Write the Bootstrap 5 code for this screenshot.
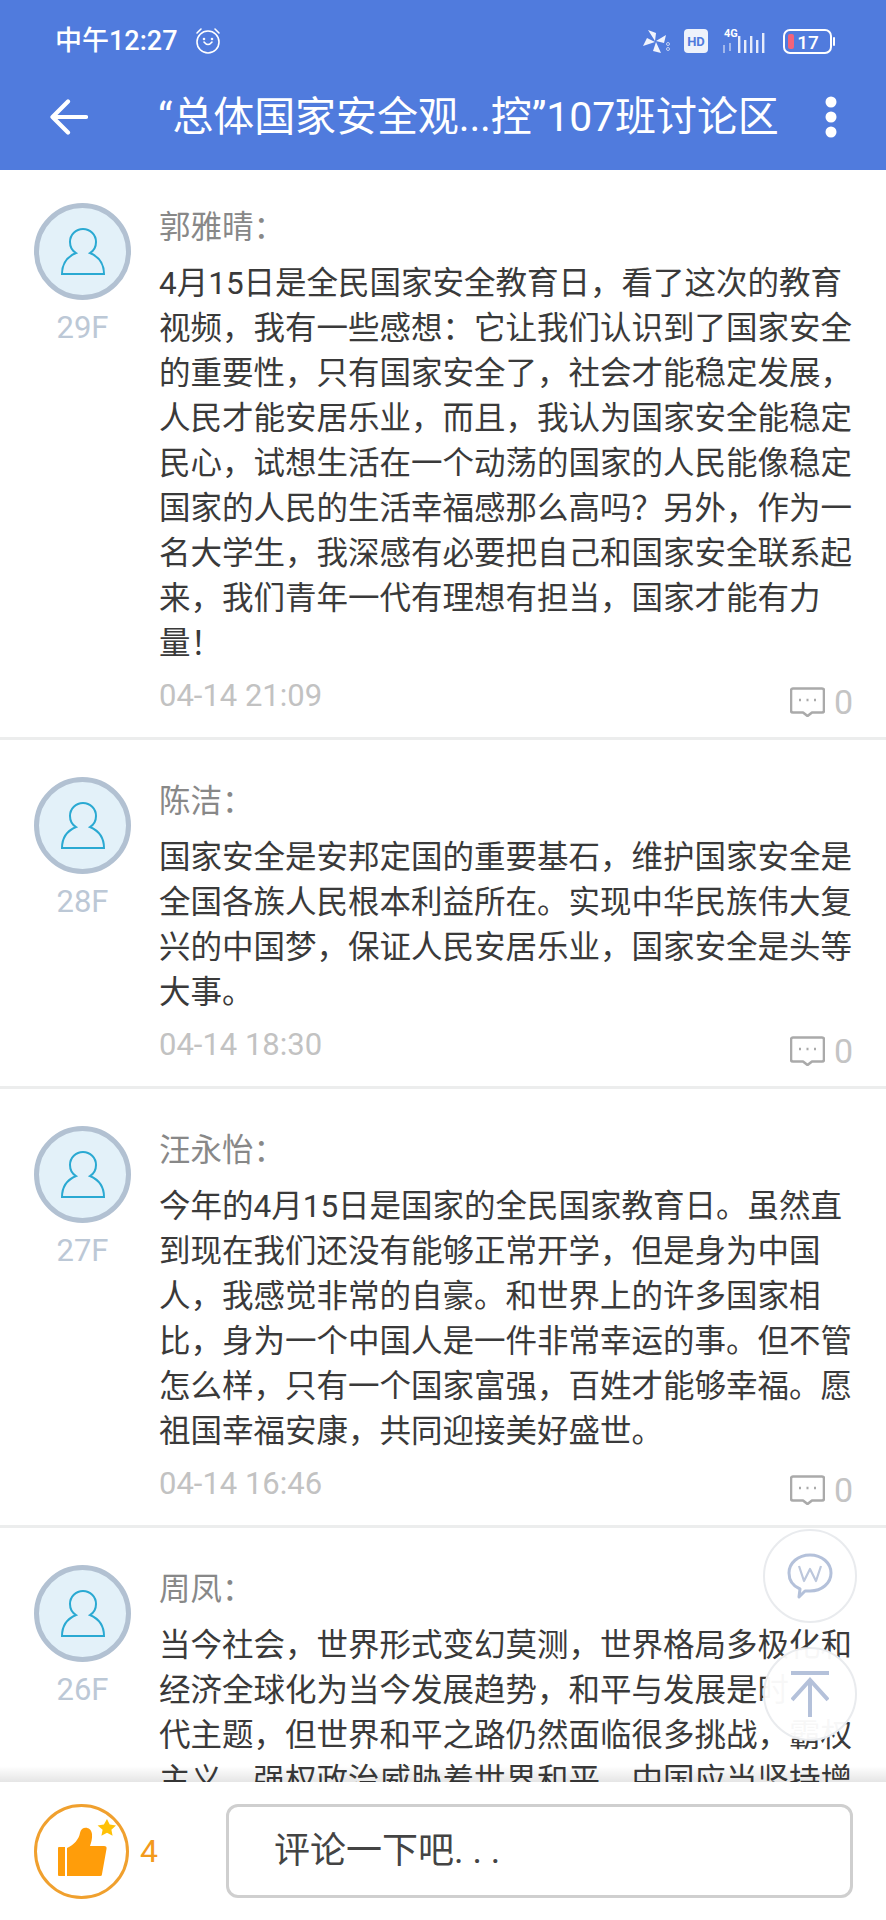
<!DOCTYPE html>
<html lang="zh-CN">
<head>
  <meta charset="UTF-8">
  <title>讨论区</title>
  <link href="https://cdn.jsdelivr.net/npm/bootstrap@5.3.3/dist/css/bootstrap.min.css" rel="stylesheet">
  <style>
    body { font-family: Roboto, "Noto Sans CJK SC", sans-serif; background: #fff; }
    .screen { width: 886px; height: 1920px; overflow: hidden; }
    .app-head { background: #507bdd; height: 170px; color: #fff; flex: none; }
    .status-row { height: 82px; padding: 0 50px 0 55px; }
    .status-time { font-size: 27px; font-weight: 500; line-height: 1; }
    .title-row { height: 70px; padding: 0 46px 0 50px; }
    .page-title { font-size: 41px; line-height: 1; margin: 0 0 0 70px; font-weight: 400; white-space: nowrap; letter-spacing: -.1px; }
    .feed { min-height: 0; }
    .feed > .post { padding: 37px 33px 0 34px; border: 0; border-bottom: 3px solid #eceded; border-radius: 0; gap: 28px; }
    .feed > .post:first-child { padding-top: 33px; }
    .face { width: 97px; height: 97px; border-radius: 50%; background: #e3f1f9; border: 5px solid #b2c1d2; }
    .floor { color: #bcc8d6; font-size: 31px; line-height: 1; margin-top: 12px; text-align: center; }
    .who { color: #888; font-size: 31.5px; line-height: 45px; margin-top: 2px; }
    .say { color: #3a3a3a; font-size: 31.5px; line-height: 45px; margin: 11px 0 0; white-space: nowrap; }
    .stamp { color: #c2c2c2; font-size: 31px; line-height: 40px; margin-top: 10px; height: 61px; }
    .reply-wrap { margin-top: 9px; }
    .reply-num { color: #c4c4c4; font-size: 34px; line-height: 1; margin-left: 9px; }
    .float-btn { position: absolute; right: 29px; width: 94px; height: 94px; border-radius: 50%; border: 2px solid #e9ebee; background: rgba(255,255,255,.96); }
    .float-chat { top: 1529px; }
    .float-top { top: 1647px; }
    .bottom-bar { height: 138px; flex: none; background: #fff; padding: 0 33px 0 34px; position: relative; }
    .bottom-bar::before { content: ""; position: absolute; left: 0; right: 0; top: -16px; height: 16px; background: linear-gradient(rgba(0,0,0,0), rgba(0,0,0,.1)); }
    .like-circle { width: 95px; height: 95px; border-radius: 50%; border: 3px solid #f0a02e; }
    .like-icon { margin: 0 0 6px 10px; }
    .like-num { color: #f39a1c; font-size: 32px; margin-left: 11px; width: 86px; }
    .comment-box { height: 94px; border: 3px solid #cfcfcf; border-radius: 12px; color: #444; font-size: 36px; padding-left: 45px; }
  </style>
</head>
<body>
  <div class="screen d-flex flex-column position-relative">
    <header class="app-head d-flex flex-column">
      <div class="status-row d-flex align-items-center justify-content-between">
        <div class="d-flex align-items-center">
          <span class="status-time">中午12:27</span>
          <svg class="ms-3" width="28" height="28" viewBox="0 0 28 28" fill="none" stroke="#fff" stroke-width="1.6" stroke-linecap="round">
            <circle cx="14" cy="15" r="11"/><path d="M3 6l4-4M25 6l-4-4M10 15q4 5 8 0"/>
            <circle cx="10" cy="12" r=".5"/><circle cx="18" cy="12" r=".5"/>
          </svg>
        </div>
        <div class="d-flex align-items-center">
          <svg width="28" height="25" viewBox="0 0 28 25" fill="#f1f4fc">
            <path d="M12 12L5 1l8 3zM13 12L23 6l-2 8zM13 13l5 11-8-2zM12 13L0 17l4-8z"/>
            <circle cx="25" cy="15" r="1.500" fill="none" stroke="#c5d2f2"/><circle cx="25" cy="20" r="1.500" fill="none" stroke="#c5d2f2"/>
          </svg>
          <svg style="margin-left:13px" width="24" height="24" viewBox="0 0 24 24"><rect width="24" height="24" rx="4" fill="#eef2fb"/><text x="12" y="17" font-size="13" font-weight="700" text-anchor="middle" fill="#507bdd" font-family="Roboto">HD</text></svg>
          <svg style="margin-left:13px" width="44" height="28" viewBox="0 0 44 28" fill="#e6ecfa">
            <text x="3" y="10" font-size="11" font-weight="700" fill="#fff" font-family="Roboto">4G</text>
            <rect x="17" y="9" width="2.400" height="17"/><rect x="23" y="13" width="2.400" height="13"/><rect x="29" y="9" width="2.400" height="17"/><rect x="35" y="13" width="2.400" height="13"/><rect x="41" y="6" width="2.400" height="20"/>
            <path d="M3 18v8M9 16v8" stroke="#c5d2f2" stroke-width="1.400"/>
          </svg>
          <svg style="margin-left:18px" width="53" height="25" viewBox="0 0 53 25">
            <rect x="1" y="1" width="47" height="23" rx="6" fill="none" stroke="#fff" stroke-width="2"/>
            <rect x="5" y="5" width="6" height="15" rx="2" fill="#f2637a"/>
            <text x="25" y="20" font-size="19" font-weight="500" text-anchor="middle" fill="#fff" font-family="Roboto">17</text>
            <rect x="50" y="8" width="2" height="9" rx="1" fill="#fff"/>
          </svg>
        </div>
      </div>
      <div class="title-row d-flex align-items-center">
        <svg width="38" height="36" viewBox="0 0 38 36" fill="none" stroke="#fff" stroke-width="4.200" stroke-linecap="round" stroke-linejoin="round"><path d="M36 18H3M18 2.500L2.500 18 18 33.500"/></svg>
        <h1 class="page-title">“总体国家安全观...控”107班讨论区</h1>
        <svg class="ms-auto" width="18" height="42" viewBox="0 0 18 42" fill="#fff"><circle cx="9" cy="6" r="5.500"/><circle cx="9" cy="21" r="5.500"/><circle cx="9" cy="36" r="5.500"/></svg>
      </div>
    </header>

    <main class="feed flex-grow-1 overflow-hidden list-group list-group-flush" id="feed"></main>

    <div class="float-btn float-chat d-flex align-items-center justify-content-center">
      <svg width="46" height="46" viewBox="0 0 46 46" fill="none" stroke="#b4c1da" stroke-width="3" stroke-linejoin="round"><path d="M23 2c12 0 21 8 21 18S35 38 23 38c-2 0-3 0-5 0l-6 6 1-8C6 33 2 27 2 20 2 10 11 2 23 2z"/><path d="M12 13l5 15 6-12 6 12 5-15" stroke-width="2.200" stroke="#bcc7dc"/></svg>
    </div>
    <div class="float-btn float-top d-flex align-items-center justify-content-center">
      <svg width="38" height="46" viewBox="0 0 38 46" fill="none" stroke="#b4c1da" stroke-width="4"><path d="M0 2h38M19 46V9M1 29L19 9l18 20"/></svg>
    </div>

    <footer class="bottom-bar d-flex align-items-center">
      <div class="like-circle d-flex align-items-center justify-content-center flex-shrink-0">
        <svg class="like-icon" width="58" height="58" viewBox="0 0 58 58">
          <path fill="#ff9d0a" d="M1 28h6v29H1a1 1 0 0 1-1-1V29a1 1 0 0 1 1-1zM9 29C16 26 21 20 22 14 23 7 33 7 34 15 34.500 20 33 24 32 27H46C48 27 49 28 48.500 30L44 55C44 57 43 57 41 57H9z"/>
          <path fill="#ffc107" d="M49 0l2.700 5.600 6.300.8-4.600 4.300 1.200 6.100-5.600-3-5.600 3 1.200-6.100L39.600 6.400l6.300-.8z"/>
        </svg>
      </div>
      <span class="like-num">4</span>
      <div class="comment-box flex-grow-1 d-flex align-items-center">评论一下吧. . .</div>
    </footer>
  </div>

  <script src="https://cdn.jsdelivr.net/npm/bootstrap@5.3.3/dist/js/bootstrap.bundle.min.js"></script>
  <script>
    const posts = [
      { name: '郭雅晴', floor: '29F', time: '04-14 21:09', lines: [
        '4月15日是全民国家安全教育日，看了这次的教育',
        '视频，我有一些感想：它让我们认识到了国家安全',
        '的重要性，只有国家安全了，社会才能稳定发展，',
        '人民才能安居乐业，而且，我认为国家安全能稳定',
        '民心，试想生活在一个动荡的国家的人民能像稳定',
        '国家的人民的生活幸福感那么高吗？另外，作为一',
        '名大学生，我深感有必要把自己和国家安全联系起',
        '来，我们青年一代有理想有担当，国家才能有力',
        '量！'] },
      { name: '陈洁', floor: '28F', time: '04-14 18:30', lines: [
        '国家安全是安邦定国的重要基石，维护国家安全是',
        '全国各族人民根本利益所在。实现中华民族伟大复',
        '兴的中国梦，保证人民安居乐业，国家安全是头等',
        '大事。'] },
      { name: '汪永怡', floor: '27F', time: '04-14 16:46', lines: [
        '今年的4月15日是国家的全民国家教育日。虽然直',
        '到现在我们还没有能够正常开学，但是身为中国',
        '人，我感觉非常的自豪。和世界上的许多国家相',
        '比，身为一个中国人是一件非常幸运的事。但不管',
        '怎么样，只有一个国家富强，百姓才能够幸福。愿',
        '祖国幸福安康，共同迎接美好盛世。'] },
      { name: '周凤', floor: '26F', time: '', lines: [
        '当今社会，世界形式变幻莫测，世界格局多极化和',
        '经济全球化为当今发展趋势，和平与发展是时',
        '代主题，但世界和平之路仍然面临很多挑战，霸权',
        '主义、强权政治威胁着世界和平。中国应当坚持增'] }
    ];

    const faceSvg = '<svg width="44" height="47" viewBox="0 0 44 47" fill="none" stroke="#2aa9d2" stroke-width="2"><path d="M1 46C1 34 8 28 15 25 10 22 9 17 9 14A13 13 0 0 1 35 14C35 17 34 22 29 25 36 28 43 34 43 46z"/></svg>';
    const replySvg = '<svg width="35" height="30" viewBox="0 0 35 30" fill="none" stroke="#aaa" stroke-width="2.600" stroke-linejoin="round"><path d="M3 1.500h29a2 2 0 0 1 2 2v20a2 2 0 0 1-2 2H22l-4.500 3.500-4.500-3.500H3a2 2 0 0 1-2-2v-20a2 2 0 0 1 2-2z"/><path d="M9 13h2M16.500 13h2M24 13h2" stroke-width="2.400"/></svg>';

    document.getElementById('feed').innerHTML = posts.map(p => `
      <article class="post list-group-item d-flex">
        <div class="flex-shrink-0">
          <div class="face d-flex align-items-center justify-content-center">${faceSvg}</div>
          <div class="floor">${p.floor}</div>
        </div>
        <div class="flex-grow-1">
          <div class="who">${p.name}：</div>
          <p class="say">${p.lines.join('<br>')}</p>
          <div class="stamp d-flex justify-content-between align-items-start">
            <span>${p.time}</span>
            <span class="reply-wrap d-flex align-items-center">${replySvg}<span class="reply-num">0</span></span>
          </div>
        </div>
      </article>`).join('');
  </script>
</body>
</html>
